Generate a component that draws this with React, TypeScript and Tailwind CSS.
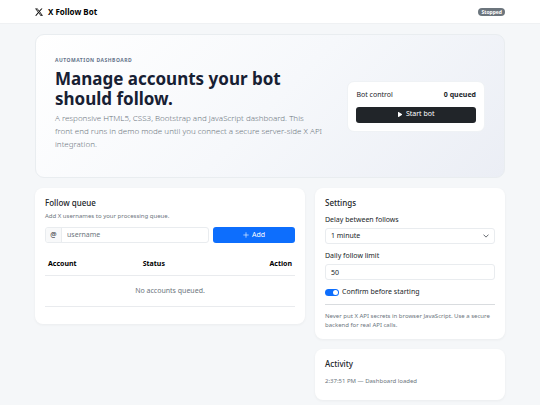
import React, { useState } from "react";

interface CardProps {
  title: string;
  className?: string;
  children: React.ReactNode;
}

const Card: React.FC<CardProps> = ({ title, className = "", children }) => (
  <section
    className={`bg-white rounded-lg p-[10px] shadow-[0_1px_3px_rgba(33,37,41,0.05)] ${className}`}
  >
    <h2 className="text-[8px] leading-[10px] font-medium">{title}</h2>
    {children}
  </section>
);

const XLogo = () => (
  <svg className="w-2 h-2" viewBox="0 0 16 16" fill="currentColor" aria-hidden="true">
    <path d="M12.6.75h2.454l-5.36 6.142L16 15.25h-4.937l-3.867-5.07-4.425 5.07H.316l5.733-6.57L0 .75h5.063l3.495 4.633L12.601.75Zm-.86 13.028h1.36L4.323 2.145H2.865z" />
  </svg>
);

const Header = () => (
  <header className="bg-white border-b border-[#eff1f3]">
    <div className="flex items-center justify-between h-[23px] px-[35px]">
      <a href="#" className="flex items-center gap-[5px] text-[8px] font-bold text-black">
        <XLogo />
        X Follow Bot
      </a>
      <span className="bg-[#6c757d] text-white text-[5px] leading-[8px] font-bold rounded-full px-[3px]">
        Stopped
      </span>
    </div>
  </header>
);

const Hero: React.FC<{ queued: number }> = ({ queued }) => (
  <section className="flex items-center gap-[7px] min-h-[144px] p-[19px] rounded-[9px] border border-[#e9edf0] bg-linear-135 from-white via-[#f6f8fb] to-[#ebeef5]">
    <div className="flex-1">
      <p className="text-[5px] leading-[8px] font-bold tracking-widest text-[#64748b] mb-[5px]">
        AUTOMATION DASHBOARD
      </p>
      <h1 className="text-[17px] leading-[20px] font-bold text-[#172033] max-w-[250px] mb-[2px]">
        Manage accounts your bot should follow.
      </h1>
      <p className="text-[8px] leading-[13px] font-light text-[#6c757d] mb-[6px]">
        A responsive HTML5, CSS3, Bootstrap and JavaScript dashboard. This
        <br />
        front end runs in demo mode until you connect a secure server-side X API
        integration.
      </p>
    </div>
    <div className="w-[32%] bg-white rounded-[7px] border border-[#eff2f5] p-2">
      <div className="flex items-center justify-between leading-[10px] mb-[7px]">
        <span>Bot control</span>
        <strong>{queued} queued</strong>
      </div>
      <button
        type="button"
        className="flex items-center justify-center gap-1 w-full h-4 rounded-[3px] bg-[#212529] text-white"
      >
        <svg className="w-1 h-[5px]" viewBox="0 0 4 5" fill="currentColor" aria-hidden="true">
          <path d="M0 .4C0 .1.3-.1.6.1l3.2 2c.3.2.3.6 0 .8l-3.2 2c-.3.2-.6 0-.6-.3z" />
        </svg>
        Start bot
      </button>
    </div>
  </section>
);

const FollowQueue = () => {
  const [username, setUsername] = useState("");

  return (
    <Card title="Follow queue" className="pb-[17px]">
      <p className="text-[6px] leading-[9px] text-[#6c757d] mt-1">
        Add X usernames to your processing queue.
      </p>
      <form
        className="grid grid-cols-[2fr_1fr] gap-1 mt-[6px]"
        onSubmit={(e) => e.preventDefault()}
      >
        <div className="flex h-4 rounded-[3px] border border-[#e9ecef] overflow-hidden">
          <label
            htmlFor="username"
            className="flex items-center justify-center w-4 bg-[#f8f9fa] border-r border-[#e9ecef]"
          >
            @
          </label>
          <input
            id="username"
            type="text"
            placeholder="username"
            value={username}
            onChange={(e) => setUsername(e.target.value)}
            className="flex-1 min-w-0 px-[5px] outline-none placeholder:text-[#6c757d]"
          />
        </div>
        <button
          type="submit"
          className="flex items-center justify-center gap-[3px] h-4 rounded-[3px] bg-[#0d6efd] text-white"
        >
          <svg className="w-[6px] h-[6px]" viewBox="0 0 6 6" stroke="currentColor" strokeWidth="0.6" aria-hidden="true">
            <path d="M3 .3v5.4M.3 3h5.4" />
          </svg>
          Add
        </button>
      </form>
      <table className="w-full mt-[10px]">
        <thead>
          <tr className="h-[22px] border-b border-[#e9ebee] text-black">
            <th className="text-left px-[3px]">Account</th>
            <th className="text-left px-[3px]">Status</th>
            <th className="text-right px-[3px]">Action</th>
          </tr>
        </thead>
        <tbody>
          <tr className="h-[31px] border-b border-[#e9ebee]">
            <td colSpan={3} className="text-center text-[#6c757d] pt-[2px]">
              No accounts queued.
            </td>
          </tr>
        </tbody>
      </table>
    </Card>
  );
};

const Settings = () => {
  const [confirm, setConfirm] = useState(true);

  return (
    <Card title="Settings" className="pb-[9px]">
      <label htmlFor="delay" className="block leading-[10px] mt-[7px] mb-[3px]">
        Delay between follows
      </label>
      <div className="relative">
        <select
          id="delay"
          defaultValue="1"
          className="appearance-none block w-full h-4 px-[5px] rounded-[3px] border border-[#e9ecef] bg-white"
        >
          <option value="1">1 minute</option>
          <option value="5">5 minutes</option>
          <option value="10">10 minutes</option>
        </select>
        <svg
          className="absolute right-[6px] top-[5px] w-[6px] h-[6px] pointer-events-none"
          viewBox="0 0 16 16"
          fill="none"
          stroke="#343a40"
          strokeWidth="2"
          strokeLinecap="round"
          strokeLinejoin="round"
          aria-hidden="true"
        >
          <path d="m2 5 6 6 6-6" />
        </svg>
      </div>
      <label htmlFor="limit" className="block leading-[10px] mt-[7px] mb-[3px]">
        Daily follow limit
      </label>
      <input
        id="limit"
        type="text"
        inputMode="numeric"
        defaultValue="50"
        className="block w-full h-4 px-[5px] rounded-[3px] border border-[#e9ecef] bg-white"
      />
      <label className="flex items-center gap-[3px] leading-[10px] mt-[7px]">
        <input
          type="checkbox"
          role="switch"
          checked={confirm}
          onChange={(e) => setConfirm(e.target.checked)}
          className="appearance-none flex items-center w-[14px] h-[7px] p-px rounded-full bg-[#adb5bd] checked:bg-[#0d6efd] checked:justify-end before:w-[5px] before:h-[5px] before:rounded-full before:bg-white"
        />
        Confirm before starting
      </label>
      <hr className="border-[#d9dcdf] mt-[7px] mb-[7px]" />
      <p className="text-[6px] leading-[9px] text-[#6c757d]">
        Never put X API secrets in browser JavaScript. Use a secure backend for
        real API calls.
      </p>
    </Card>
  );
};

const App = () => (
  <div className="min-h-screen bg-[#f5f7f9] text-[#212529] text-[7px] font-['Noto_Sans',sans-serif]">
    <Header />
    <main className="px-[35px] pt-[10px] pb-[6px]">
      <Hero queued={0} />
      <div className="grid grid-cols-[27fr_19fr] items-start gap-[10px] mt-[10px]">
        <FollowQueue />
        <div className="min-w-0 flex flex-col gap-[10px]">
          <Settings />
          <Card title="Activity">
            <p className="text-[6px] leading-[9px] text-[#6c757d] mt-2 mb-1">
              2:37:51 PM — Dashboard loaded
            </p>
          </Card>
        </div>
      </div>
    </main>
  </div>
);

export default App;
